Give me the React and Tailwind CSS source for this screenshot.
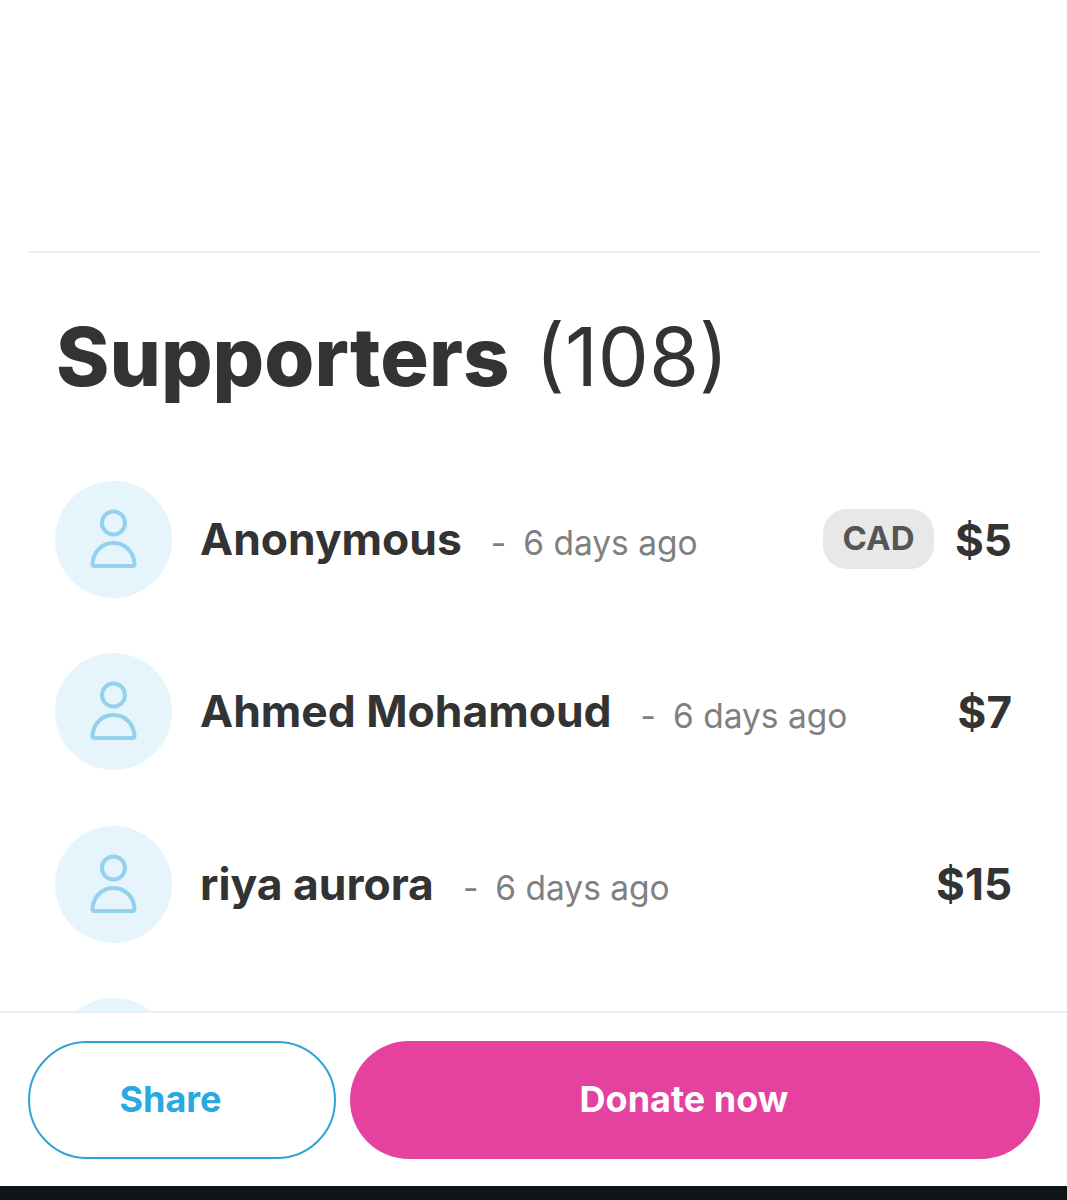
const rows = [
  { name: "Anonymous", amount: "$5", cad: true },
  { name: "Ahmed Mohamoud", amount: "$7" },
  { name: "riya aurora", amount: "$15" },
  { name: "", amount: "" },
];

function Avatar() {
  return (
    <div className="flex h-[117px] w-[117px] shrink-0 items-center justify-center rounded-full bg-[#e6f4fb]">
      <svg width="117" height="117" viewBox="0 0 117 117" fill="none" stroke="#94d1ef" strokeWidth="4">
        <circle cx="58.5" cy="42" r="11.5" />
        <path d="M39 85 C37.8 85 37.3 84 37.5 82.5 C38.5 70.5 47 62 58.5 62 C70 62 78.5 70.5 79.5 82.5 C79.7 84 79.2 85 78 85 Z" strokeLinejoin="round" />
      </svg>
    </div>
  );
}

export default function App() {
  return (
    <div className="flex h-[1200px] w-[1067px] flex-col overflow-hidden bg-white font-['Inter',sans-serif] text-[#333333]">
      <div className="min-h-0 flex-1 overflow-hidden">
        <div className="ml-7 mr-[27px] mt-[251px] border-t-2 border-[#eeeeee]" />
        <h2 className="mt-[50px] ml-[56px] flex items-baseline text-[81px] leading-[108px]">
          <span className="font-extrabold">Supporters</span>
          <span className="ml-[26px] font-normal">(108)</span>
        </h2>
        <div className="mt-[70px] ml-[55px] mr-[55px] flex flex-col gap-[55.3px]">
          {rows.map((r, i) => (
            <div key={i} className="flex items-center">
              <Avatar />
              {r.name && (
                <>
                  <span className="ml-[28px] text-[44.4px] font-bold">{r.name}</span>
                  <span className="ml-[29px] mt-2 text-[33.5px] text-[#808080]">-</span>
                  <span className="ml-[17px] mt-2 text-[33.5px] text-[#808080]">6 days ago</span>
                  <div className="ml-auto flex items-center">
                    {r.cad && (
                      <span className="mr-[21px] mb-[2px] flex h-[60px] w-[111px] items-center justify-center rounded-[24px] bg-[#e8e8e8] text-[33px] font-bold text-[#555555]">
                        CAD
                      </span>
                    )}
                    <span className="text-[44px] font-bold">{r.amount}</span>
                  </div>
                </>
              )}
            </div>
          ))}
        </div>
      </div>
      <div className="flex h-[175px] shrink-0 gap-[14px] border-t-2 border-[#eeeeee] bg-white pl-7 pr-[27px] pt-[27px]">
        <button className="mt-px flex h-[118px] w-[308px] shrink-0 items-center justify-center rounded-full border-2 border-[#2ea3d5] pr-[23px] pb-[2px] text-[36px] font-bold text-[#29a9e1]">
          Share
        </button>
        <button className="mt-px flex h-[118px] flex-1 items-center justify-center rounded-full bg-[#e5429f] pr-[22px] pb-[2px] text-[36px] font-bold text-white">
          Donate now
        </button>
      </div>
      <div className="h-[14px] shrink-0 bg-[#0f1418]" />
    </div>
  );
}
